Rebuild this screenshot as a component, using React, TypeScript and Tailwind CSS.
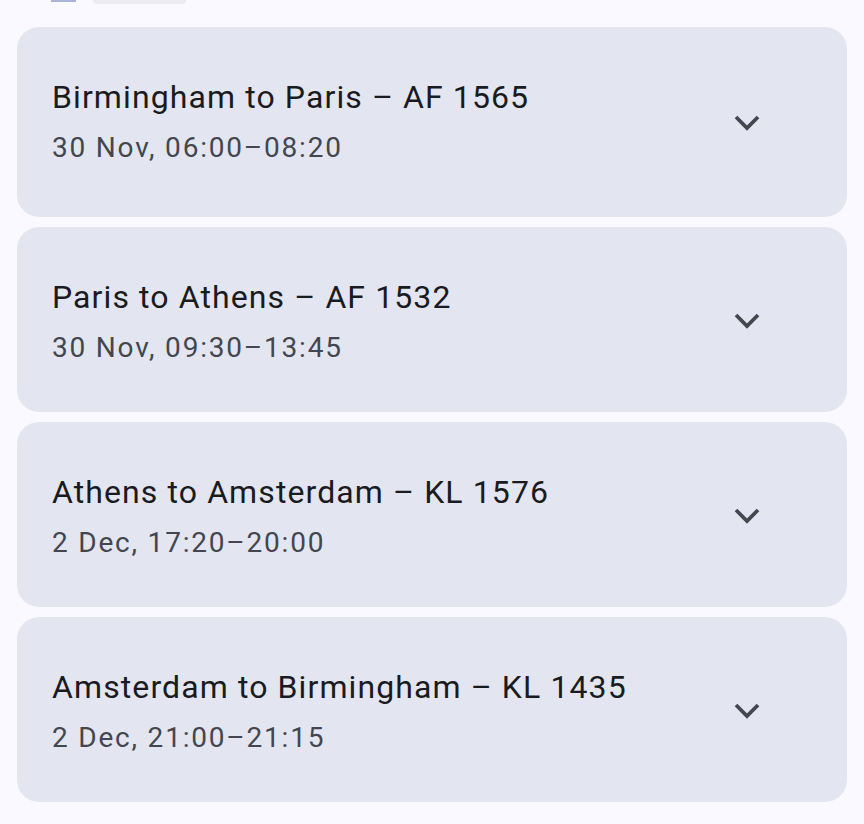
const flights = [
  { title: "Birmingham to Paris – AF 1565", time: "30 Nov, 06:00–08:20", first: true },
  { title: "Paris to Athens – AF 1532", time: "30 Nov, 09:30–13:45" },
  { title: "Athens to Amsterdam – KL 1576", time: "2 Dec, 17:20–20:00" },
  { title: "Amsterdam to Birmingham – KL 1435", time: "2 Dec, 21:00–21:15" },
];

function Chevron() {
  return (
    <svg width="30" height="30" viewBox="0 0 24 24" className="text-[#44474e]">
      <path d="M3.2 8l8.8 8.8 8.8-8.8" fill="none" stroke="currentColor" strokeWidth="3" />
    </svg>
  );
}

export default function App() {
  return (
    <div className="w-[864px] h-[824px] bg-[#f9f9ff] overflow-hidden font-['Roboto',sans-serif]">
      <div className="flex items-start gap-[17px] pl-[51px] h-[27px]">
        <div className="w-[25px] h-[2px] bg-[#a9b4d9]" />
        <div className="w-[93px] h-[4px] rounded-b-full bg-[#ebebf0]" />
      </div>
      <div className="flex flex-col gap-[10px] px-[17px]">
        {flights.map((f) => (
          <div
            key={f.title}
            className={`flex items-center justify-between rounded-[22px] bg-[#e3e6f0] pl-[35px] pr-[85px] ${
              f.first ? "h-[190px]" : "h-[185px]"
            }`}
          >
            <div className={`flex flex-col gap-[17px] pt-[4px] ${f.first ? "mb-[5px]" : ""}`}>
              <div className="text-[32px] leading-[36px] tracking-[1.1px] text-[#1a1b20]">{f.title}</div>
              <div className="text-[28px] leading-[32px] tracking-[1.8px] text-[#44464f]">{f.time}</div>
            </div>
            <Chevron />
          </div>
        ))}
      </div>
    </div>
  );
}
